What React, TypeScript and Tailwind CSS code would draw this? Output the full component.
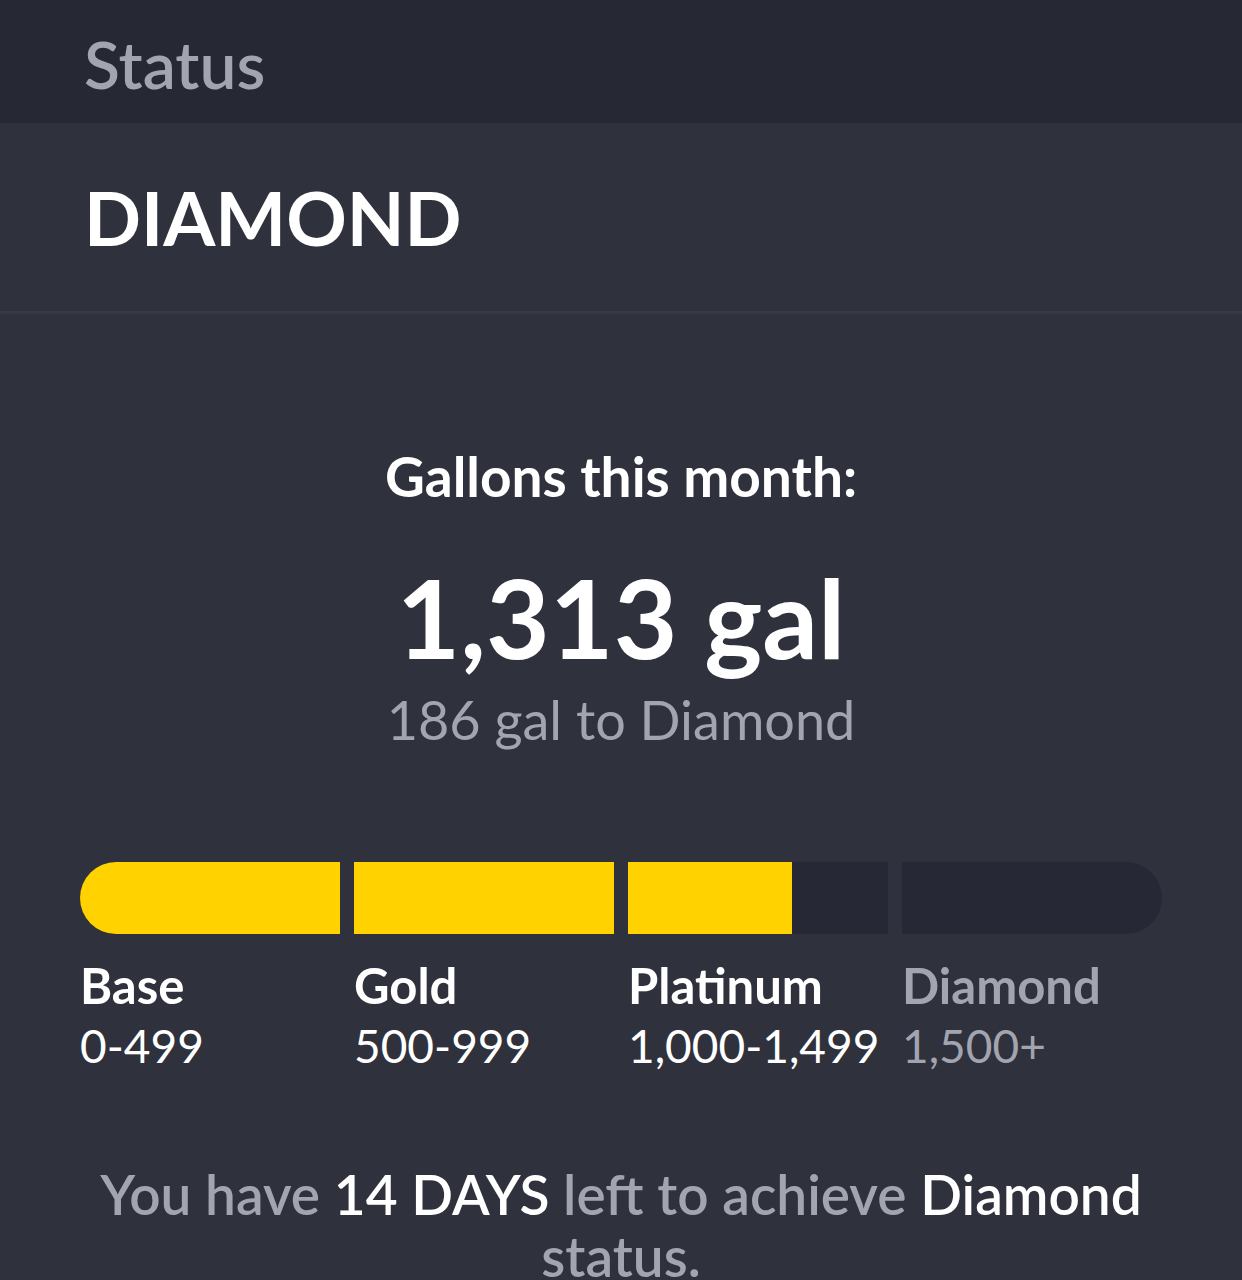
import React from 'react';

const tiers = [
  { name: 'Base', range: '0-499', fill: 1, active: true },
  { name: 'Gold', range: '500-999', fill: 1, active: true },
  { name: 'Platinum', range: '1,000-1,499', fill: 0.63, active: true },
  { name: 'Diamond', range: '1,500+', fill: 0, active: false },
];

const App: React.FC = () => {
  return (
    <div className="min-h-[1280px] w-[1242px] overflow-hidden bg-[#2f313d]" style={{ fontFamily: 'Lato, "Noto Sans", sans-serif' }}>
      {/* Header */}
      <div className="flex h-[123px] items-center bg-[#262834] px-[84px]">
        <h1 className="pt-[4px] text-[66px] font-semibold leading-none text-[#a2a5b0]">Status</h1>
      </div>

      {/* Current tier */}
      <div className="flex h-[191px] items-center border-b-[3px] border-[#373946] px-[84px]">
        <h2 className="text-[75px] font-bold leading-none text-white">DIAMOND</h2>
      </div>

      {/* Gallons */}
      <div className="flex flex-col items-center pt-[135px]">
        <p className="text-[55px] font-bold leading-none text-white">Gallons this month:</p>
        <p className="mt-[57px] text-[110px] font-bold leading-none text-white">1,313 gal</p>
        <p className="mt-[22px] text-[54px] leading-none text-[#a2a5b0]">186 gal to Diamond</p>
      </div>

      {/* Progress bar */}
      <div className="mt-[115px] px-[80px]">
        <div className="grid grid-cols-4 gap-[14px]">
          {tiers.map((t, i) => (
            <div
              key={t.name}
              className={
                'h-[72px] overflow-hidden bg-[#262835] ' +
                (i === 0 ? 'rounded-l-[36px] ' : '') +
                (i === tiers.length - 1 ? 'rounded-r-[36px]' : '')
              }
            >
              <div className="h-full bg-[#ffd200]" style={{ width: `${t.fill * 100}%` }} />
            </div>
          ))}
        </div>
        <div className="mt-[25px] grid grid-cols-4 gap-[14px]">
          {tiers.map((t) => (
            <div key={t.name} className={t.active ? 'text-white' : 'text-[#a2a5b0]'}>
              <div className="text-[49px] font-bold leading-[52px]">{t.name}</div>
              <div className="mt-[9px] whitespace-nowrap text-[46px] leading-[52px]">{t.range}</div>
            </div>
          ))}
        </div>
      </div>

      {/* Days left */}
      <p className="mx-auto mt-[91px] w-[1100px] text-center text-[55px] font-semibold leading-[62px] text-[#a2a5b0]">
        You have <span className="text-white">14 DAYS</span> left to achieve <span className="text-white">Diamond</span> status.
      </p>
    </div>
  );
};

export default App;
